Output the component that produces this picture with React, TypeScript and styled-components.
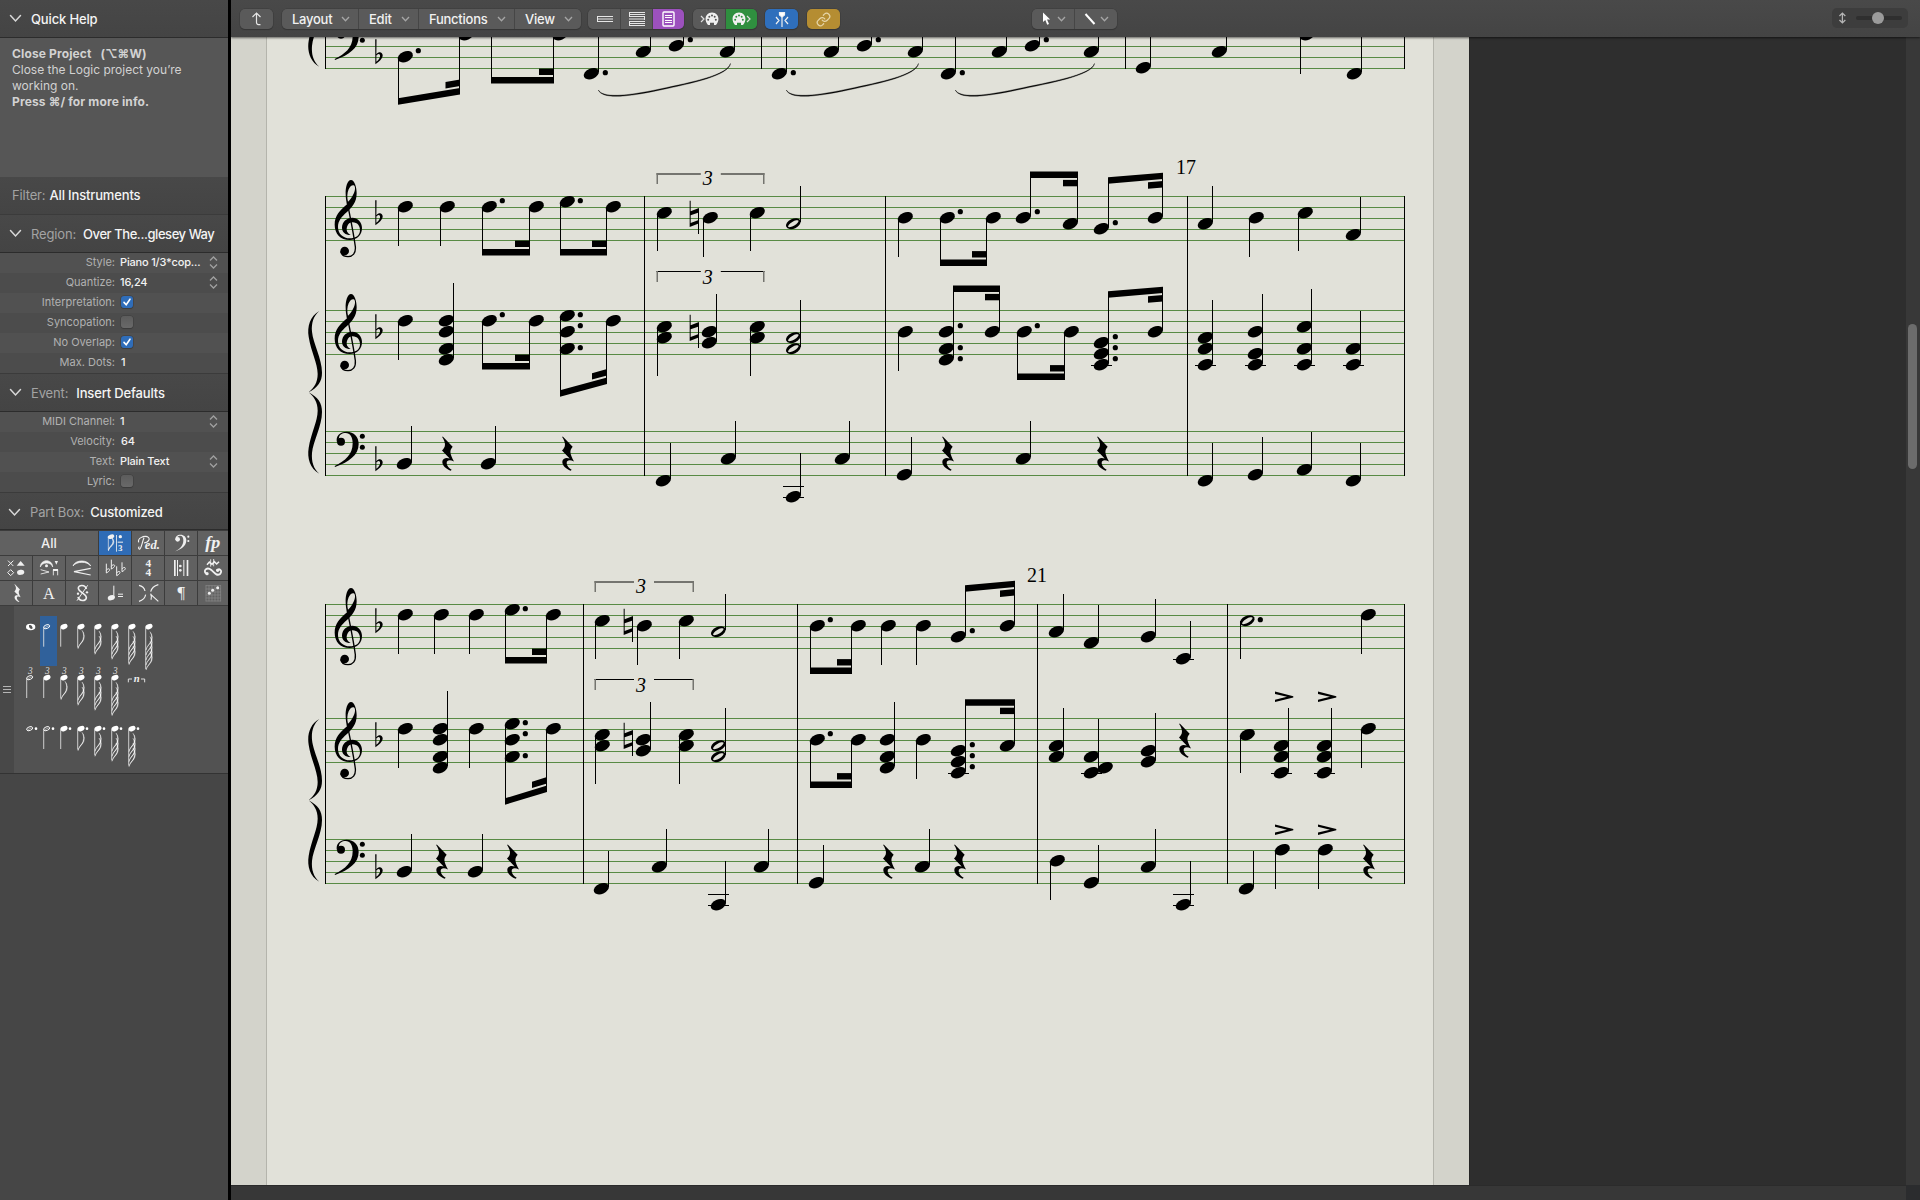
import React from "react";
import styled, { createGlobalStyle, css } from "styled-components";
import { Link } from "lucide-react";

const Global = createGlobalStyle`
  * { box-sizing: border-box; }
  html, body { margin: 0; padding: 0; background: #2e2e2e; }
  body { font-family: Inter, "Liberation Sans", sans-serif; overflow: hidden; }
`;

const SERIF = '"Liberation Serif", serif';
const PAPER = "#e1e1d9";

/* ---------- window frame ---------- */

const Window = styled.div`
  width: 1920px;
  height: 1200px;
  display: flex;
  overflow: hidden;
  background: #2e2e2e;
`;

const Sidebar = styled.aside`
  width: 231px;
  flex: none;
  display: flex;
  flex-direction: column;
  background: #464646;
  border-right: 3px solid #000;
`;

const Main = styled.main`
  flex: 1;
  min-width: 0;
  display: flex;
  flex-direction: column;
`;

/* ---------- sidebar ---------- */

const Header = styled.div<{ $h: number; $line?: string; $pad?: number; $up?: number; $down?: number }>`
  flex: none;
  height: ${(p) => p.$h}px;
  display: flex;
  align-items: center;
  padding: ${(p) => p.$down ?? 0}px 0 ${(p) => p.$up ?? 0}px ${(p) => p.$pad ?? 9}px;
  font-size: 13px;
  letter-spacing: -0.15px;
  white-space: pre;
  color: #f4f4f4;
  font-weight: 500;
  background: linear-gradient(#484848, #444);
  border-bottom: 1px solid ${(p) => p.$line ?? "#2c2c2c"};
`;

const Dim = styled.span<{ $gap?: number }>`
  color: #a3a3a3;
  font-weight: 400;
  margin-right: ${(p) => p.$gap ?? 7}px;
`;

const Tight = styled.span`
  letter-spacing: -0.43px;
`;

const Disclosure = styled.svg`
  width: 13px;
  height: 9px;
  margin-right: 9px;
  flex: none;
`;

const Help = styled.div`
  flex: none;
  height: 139px;
  padding: 8px 0 0 12px;
  background: #565656;
  color: #d2d2d2;
  font-size: 12px;
  line-height: 16px;
  white-space: pre;
  p { margin: 0; letter-spacing: 0; }
  b { font-weight: 700; letter-spacing: 0.14px; }
`;

const Param = styled.div<{ $alt?: boolean }>`
  flex: none;
  height: 20px;
  display: flex;
  align-items: center;
  padding: 0 10px 2px 0;
  background: ${(p) => (p.$alt ? "#4c4c4c" : "#515151")};
  font-size: 11px;
`;

const ParamLabel = styled.span`
  width: 115px;
  text-align: right;
  color: #b1b1b1;
  flex: none;
`;

const ParamValue = styled.span<{ $in?: number }>`
  margin-left: ${(p) => p.$in ?? 5}px;
  flex: 1;
  color: #f2f2f2;
  font-weight: 500;
  letter-spacing: -0.18px;
  white-space: nowrap;
`;

const Check = styled.span<{ $on?: boolean }>`
  margin-left: 6px;
  width: 12px;
  height: 12px;
  border-radius: 3px;
  display: flex;
  background: ${(p) => (p.$on ? "#2f6db9" : "linear-gradient(#5c5c5c, #696969)")};
  box-shadow: 0 0 0 0.5px #3c3c3c, 0 1px 1px rgba(0, 0, 0, 0.25);
`;

const Divider = styled.div`
  flex: none;
  height: 1px;
  background: #3b3b3b;
`;

const Palette = styled.div`
  flex: none;
  display: grid;
  grid-template-columns: repeat(6, 32px) 30px;
  grid-auto-rows: 24px;
  gap: 1px;
  padding: 1px 0;
  background: #3c3c3c;
`;

const Cell = styled.div<{ $on?: boolean; $wide?: boolean }>`
  display: flex;
  align-items: center;
  justify-content: flex-start;
  color: #f0f0f0;
  font-size: 13px;
  font-weight: 500;
  overflow: hidden;
  background: ${(p) => (p.$on ? "#2f6cb6" : "#616161")};
  ${(p) => p.$wide && css`grid-column: span 3; justify-content: center;`}
  svg { width: 32px; height: 24px; flex: none; }
`;

const Parts = styled.div`
  flex: none;
  height: 168px;
  display: flex;
  background: #525252;
  border-bottom: 1px solid #333;
`;

const Grip = styled.div`
  width: 14px;
  flex: none;
  display: flex;
  flex-direction: column;
  align-items: center;
  justify-content: center;
  gap: 2px;
  background: #484848;
  i { width: 8px; height: 1px; background: #b5b5b5; }
`;

const PartRows = styled.div`
  padding: 10px 0 0 9px;
`;

const PartRow = styled.div`
  height: 51px;
  display: flex;
`;

const PartCell = styled.div<{ $on?: boolean }>`
  width: 17px;
  height: 50px;
  background: ${(p) => (p.$on ? "#30619b" : "transparent")};
  svg { display: block; width: 17px; height: 50px; overflow: visible; }
`;

/* ---------- toolbar ---------- */

const Toolbar = styled.div`
  position: relative;
  z-index: 1;
  flex: none;
  height: 37px;
  display: flex;
  align-items: flex-start;
  padding: 9px 12px 0 9px;
  background: linear-gradient(#494949, #444);
  box-shadow: 0 1px 2px rgba(0, 0, 0, 0.55);
`;

const Group = styled.div<{ $ml?: number }>`
  display: flex;
  height: 20px;
  margin-left: ${(p) => p.$ml ?? 0}px;
  border-radius: 5px;
  overflow: hidden;
  box-shadow: 0 0 0 0.5px #3a3a3a, 0 1px 1px rgba(0, 0, 0, 0.3);
`;

const Btn = styled.div<{ $w: number; $bg?: string; $pl?: number }>`
  width: ${(p) => p.$w}px;
  display: flex;
  align-items: center;
  ${(p) => (p.$pl === undefined ? "justify-content: center;" : `justify-content: space-between; padding: 0 8px 1px ${p.$pl}px;`)}
  background: ${(p) => p.$bg ?? "#5a5a5a"};
  color: #f1f1f1;
  font-size: 13px;
  font-weight: 500;
  letter-spacing: -0.25px;
  & + & { border-left: 1px solid #464646; }
`;

const Spacer = styled.div`
  flex: 1;
`;

const ZoomBox = styled.div`
  width: 76px;
  height: 20px;
  margin: -1px 0 0 0;
  display: flex;
  align-items: center;
  gap: 9px;
  padding: 0 6px;
  border-radius: 5px;
  background: #3d3d3d;
`;

const Track = styled.div`
  width: 47px;
  height: 4px;
  border-radius: 2px;
  background: #2f2f2f;
  display: flex;
  align-items: center;
  padding-left: 16px;
`;

const Knob = styled.div`
  width: 12px;
  height: 12px;
  border-radius: 50%;
  background: #9b9b9b;
`;

/* ---------- score area ---------- */

const Work = styled.div`
  flex: 1;
  min-height: 0;
  display: grid;
  grid-template-columns: 1238px 1fr 14px;
  grid-template-rows: 1fr 15px;
`;

const Sheet = styled.div`
  display: flex;
  background: #d3d3cb;
  padding: 0 35px;
  svg { display: block; flex: none; }
`;

const Page = styled.div`
  width: 1168px;
  background: ${PAPER};
  border: solid #b4b4ac;
  border-width: 0 1px;
`;

const Empty = styled.div`
  background: #2e2e2e;
  border-left: 1px solid #262626;
`;

const VScroll = styled.div`
  background: #383838;
  padding: 287px 0 0 2px;
`;

const Thumb = styled.div`
  width: 9px;
  height: 145px;
  border-radius: 5px;
  background: #6c6c6c;
`;

const HScroll = styled.div`
  grid-column: span 2;
  background: #373737;
  border-top: 1px solid #2b2b2b;
`;

const Corner = styled.div`
  background: #2b2c2e;
`;

/* ---------- music glyphs, drawn in thirds of a pixel ---------- */

const G_BODY =
  "M153,90 C142,90 136,112 137,132 C137,145 139,155 141,163 C120,181 104,197 104,224 C104,252 122,270 149,270 C172,270 186,254 186,234 C186,216 173,203 157,203 C140,203 126,216 126,233 C126,246 136,255 152,255 C142,250 138,241 141,231 C144,221 150,217 158,217 C172,217 180,228 180,240 C180,256 168,265 149,265 C130,265 114,252 114,231 C114,212 126,200 140,187 C156,172 170,158 170,130 C170,112 164,90 153,90 Z M144,155 C141,142 141,130 146,118 C150,108 158,103 163,107 C167,112 165,124 160,133 C156,142 150,150 144,155 Z";
const F_BODY =
  "M111,877 C106,858 120,845 140,845 C162,845 176,860 176,882 C176,916 146,936 105,951 L104,948 C136,932 158,914 158,880 C158,860 150,849 137,849 C126,849 117,855 117,864 Z";
const REST =
  "M-15,-50 L-12,-50 L17,-20 C7,-8 8,0 21,24 C8,18 -1,20 -1,29 C0,38 6,44 14,49 L11,52 C-3,46 -15,36 -14,24 C-13,14 -2,11 8,15 L-15,-9 C-4,-19 -2,-30 -15,-50 Z";
const BRACE =
  "M58,483 C30,498 21,530 26,560 C33,605 53,640 53,672 C53,698 42,713 26,727 C54,712 66,695 66,668 C66,625 39,580 36,545 C34,520 40,498 58,483 Z";

const Flat = ({ x, y }: { x: number; y: number }) => (
  <g transform={`translate(${x} ${y}) scale(0.33333)`}>
    <path d="M-1.5,-55 L2.5,-55 L2,-10 C10,-20 21,-17 21,-5 C20,4 10,13 -1,20 Z M2,-6 L2,13 C10,6 14,0 13,-6 C12,-12 6,-12 2,-6 Z" fillRule="evenodd" />
  </g>
);

const Natural = ({ x, y }: { x: number; y: number }) => (
  <g transform={`translate(${x} ${y}) scale(0.33333)`}>
    <path d="M-13,-52 h3 v32 l25,-10 v78 h-3 v-31 l-25,10 Z M-10,-8 v23 l22,-8 v-23 Z" fillRule="evenodd" />
  </g>
);

const Rest = ({ x, y }: { x: number; y: number }) => (
  <path d={REST} transform={`translate(${x} ${y}) scale(0.33333)`} />
);

const Treble = ({ y }: { y: number }) => (
  <g transform={`translate(300 ${y - 46.5}) scale(0.33333)`}>
    <path d={G_BODY} fillRule="evenodd" />
    <path d="M142,158 C150,200 160,245 166,290 C168,310 158,320 144,320 C132,320 124,314 122,304" fill="none" stroke="#000" strokeWidth="4" />
    <circle cx="134" cy="303" r="13" />
  </g>
);

const Bass = ({ y }: { y: number }) => (
  <g transform={`translate(300 ${y - 281.5}) scale(0.33333)`}>
    <path d={F_BODY} />
    <circle cx="123" cy="875" r="12" />
    <circle cx="187" cy="859" r="7.5" />
    <circle cx="187" cy="892" r="7.5" />
  </g>
);

/* ---------- score model ---------- */

// x: pixel column of the stem; s: staff steps down from the top line
interface Note {
  x: number;
  up?: boolean;
  s: number[];
  dot?: boolean;
  half?: boolean;
  side?: number;
}
// y1/y2: upper edge of the primary beam relative to the top line; sx: start of the short beam
interface Beam {
  a: Note;
  b: Note;
  y1: number;
  y2: number;
  sx: number;
}
interface StaffData {
  notes: Note[];
  beams?: Beam[];
  rests?: number[];
  naturals?: number[];
  accents?: number[][];
  triplet?: number[];
}

const d = (x: number, ...s: number[]): Note => ({ x, s });
const u = (x: number, ...s: number[]): Note => ({ x, s, up: true });
const dot = (n: Note): Note => ({ ...n, dot: true });
const half = (n: Note): Note => ({ ...n, half: true });
const beam = (a: Note, b: Note, sx: number, y1: number, y2 = y1): Beam => ({ a, b, sx, y1, y2 });

const stepY = (top: number, s: number) => top + s * 5.5;

const Head = ({ cx, y, hollow }: { cx: number; y: number; hollow?: boolean }) => {
  const cy = Math.floor(y) - 0.33;
  return (
    <g transform={`translate(${cx} ${cy})`}>
      <ellipse rx={hollow ? 7.7 : 7.9} ry={hollow ? 4.9 : 5.2} transform="rotate(-24)" />
      {hollow && <ellipse rx="6" ry="2" fill={PAPER} transform="rotate(-31)" />}
    </g>
  );
};

const NoteView = ({ n, top, end }: { n: Note; top: number; end?: number }) => {
  const ys = n.s.map((s) => stepY(top, s));
  const hi = Math.min(...ys);
  const lo = Math.max(...ys);
  const cx = n.up ? n.x - 6.7 : n.x + 7.3;
  const tip = end ?? (n.up ? Math.floor(Math.min(hi - 38, top + 22)) : Math.round(lo + 38));
  const y1 = n.up ? tip : hi;
  const y2 = n.up ? lo - 2 : tip;
  const max = Math.max(...n.s);
  const ledgers = [10, 12].filter((l) => l <= max);
  return (
    <g>
      {n.s.map((s, i) => (
        <Head key={i} cx={cx} y={ys[i]} hollow={n.half} />
      ))}
      {n.side !== undefined && <Head cx={n.x + 7.3} y={stepY(top, n.side)} />}
      <rect x={n.x} y={y1} width="1" height={y2 - y1} />
      {ledgers.map((l) => (
        <rect key={l} x={n.x - 17} y={top + l * 5.5 - 0.5} width="21" height="1" />
      ))}
      {n.dot &&
        n.s.map((s) => (
          <circle key={s} cx={n.up ? n.x + 7.3 : n.x + 20.3} cy={stepY(top, s % 2 ? s : s - 1) - 1.3} r="2.6" />
        ))}
    </g>
  );
};

const BeamView = ({ b, top }: { b: Beam; top: number }) => {
  const x1 = b.a.x;
  const x2 = b.b.x + 1;
  const y1 = top + b.y1;
  const y2 = top + b.y2;
  const at = (x: number) => y1 + ((y2 - y1) * (x - x1)) / (x2 - x1);
  const off = b.a.up ? 8.4 : -8.4;
  const bar = (xa: number, o: number) =>
    `${xa},${at(xa) + o} ${x2},${y2 + o} ${x2},${y2 + o + 6.4} ${xa},${at(xa) + o + 6.4}`;
  return (
    <g>
      <NoteView n={b.a} top={top} end={y1 + 3} />
      <NoteView n={b.b} top={top} end={y2 + 3} />
      <polygon points={bar(x1, 0)} />
      <polygon points={bar(b.sx, off)} />
    </g>
  );
};

const Triplet = ({ t, top, soft }: { t: number[]; top: number; soft: boolean }) => {
  const [l, r, mid] = t;
  const y = soft ? top - 23.5 : top - 39.5;
  const h = soft ? 2 : 1;
  const tone = soft ? "#74746f" : "#000";
  return (
    <g>
      <rect x={l} y={y} width={mid - 6.5 - l} height={h} fill={tone} />
      <rect x={mid + 13.5} y={y} width={r - mid - 13.5} height={h} fill={tone} />
      <rect x={l} y={y} width="1.5" height="11" fill="#74746f" />
      <rect x={r - 1.5} y={y} width="1.5" height="11" fill="#74746f" />
      <text x={mid + 0.5} y={y + (soft ? 12.3 : 12.9)} fontFamily={SERIF} fontStyle="italic" fontSize="20" textAnchor="middle">3</text>
    </g>
  );
};

const Staff = ({ top, data, bass }: { top: number; data: StaffData; bass?: boolean }) => (
  <g>
    {[0, 1, 2, 3, 4].map((i) => (
      <rect key={i} x="325" y={top + i * 11 - 0.5} width="1080" height="1" fill="#588a44" />
    ))}
    {bass ? <Bass y={top} /> : <Treble y={top} />}
    <Flat x={375.7} y={top + (bass ? 33 : 22)} />
    {data.notes.map((n, i) => (
      <NoteView key={i} n={n} top={top} />
    ))}
    {data.beams?.map((b, i) => (
      <BeamView key={i} b={b} top={top} />
    ))}
    {data.rests?.map((x) => (
      <Rest key={x} x={x} y={top + 22} />
    ))}
    {data.naturals?.map((x) => (
      <Natural key={x} x={x} y={top + 21.5} />
    ))}
    {data.accents?.map(([x, y]) => (
      <path
        key={x}
        d={`M${x},${top + y - 5.2} L${x + 18.3},${top + y - 0.6} V${top + y + 0.6} L${x},${top + y + 5.2} V${top + y + 2.9} L${x + 12},${top + y} L${x},${top + y - 2.9} Z`}
      />
    ))}
  </g>
);

const TREBLE_A: StaffData = {
  notes: [
    d(398, 2), d(440, 2), d(657, 3), d(703, 4), d(750, 3), half(u(800, 5)), d(898, 4),
    u(1212, 5), d(1249, 4), d(1298, 3), u(1360, 7),
  ],
  beams: [
    beam(dot(d(482, 2)), d(529, 2), 515, 52.5),
    beam(dot(d(560, 1)), d(606, 2), 592, 52.5),
    beam(dot(d(940, 4)), d(986, 4), 972, 63),
    beam(dot(u(1030, 4)), u(1077, 5), 1063, -25),
    beam(dot(u(1108, 6)), u(1162, 4), 1148, -19.2, -23.8),
  ],
  naturals: [694],
  triplet: [656.5, 764.5, 707.3],
};

const PIANO_A: StaffData = {
  notes: [
    d(398, 2), u(453, 2, 4, 7, 9), d(657, 3, 5), u(716, 4, 6), d(750, 3, 5), half(u(800, 5, 7)), d(898, 4),
    u(1212, 5, 7, 10), u(1262, 4, 8, 10), u(1311, 3, 7, 10), u(1360, 7, 10),
  ],
  beams: [
    beam(dot(d(482, 2)), d(529, 2), 515, 52.5),
    beam(dot(d(560, 1, 4, 7)), d(606, 2), 592, 79.8, 67),
    beam(dot(u(953, 4, 7, 9)), u(999, 4), 985, -25),
    beam(dot(d(1017, 4)), d(1064, 4), 1050, 63),
    beam(dot(u(1108, 6, 8, 10)), u(1162, 4), 1148, -19.2, -23.8),
  ],
  naturals: [694],
  triplet: [656.5, 764.5, 707.3],
};

const BASS_A: StaffData = {
  notes: [
    u(411, 6), u(495, 6), u(670, 9), u(735, 5), u(800, 12), u(849, 5), u(911, 8), u(1030, 5),
    u(1212, 9), u(1262, 8), u(1311, 7), u(1360, 9),
  ],
  rests: [447, 567, 947, 1102],
};

const TREBLE_B: StaffData = {
  notes: [
    d(398, 2), d(434, 2), d(469, 2), d(595, 3), d(637, 4), d(679, 3), half(u(725, 5)), d(881, 4), d(916, 4),
    u(1063, 5), u(1098, 7), u(1155, 6), u(1190, 10), dot(half(d(1240, 3))), d(1361, 2),
  ],
  beams: [
    beam(dot(d(505, 1)), d(546, 2), 532, 52.5),
    beam(dot(d(810, 4)), d(851, 4), 837, 63),
    beam(dot(u(965, 6)), u(1014, 4), 1000, -19.2, -23.8),
  ],
  naturals: [628],
  triplet: [594.5, 694, 640.5],
};

const PIANO_B: StaffData = {
  notes: [
    d(398, 2), u(447, 2, 4, 7, 9), d(469, 2), d(595, 3, 5), u(650, 4, 6), d(679, 3, 5), half(u(725, 5, 7)),
    u(894, 4, 7, 9), d(916, 4), u(1063, 5, 7), { ...u(1098, 7, 10), side: 9 }, u(1155, 6, 8),
    d(1240, 3), u(1288, 5, 7, 10), u(1331, 5, 7, 10), d(1361, 2),
  ],
  beams: [
    beam(dot(d(505, 1, 4, 7)), d(546, 2), 532, 79.8, 67),
    beam(dot(d(810, 4)), d(851, 4), 837, 63),
    beam(dot(u(965, 6, 8, 10)), u(1014, 5), 1000, -19.2),
  ],
  rests: [1184],
  naturals: [628],
  accents: [[1275, -21.7], [1318, -21.7]],
  triplet: [594.5, 694, 640.5],
};

const BASS_B: StaffData = {
  notes: [
    u(411, 6), u(482, 6), u(608, 9), u(666, 5), u(725, 12), u(768, 5), u(823, 8), u(929, 5),
    d(1050, 4), u(1098, 8), u(1155, 5), u(1190, 12), u(1253, 9), d(1275, 2), d(1318, 2),
  ],
  rests: [441, 512, 888, 959, 1368],
  accents: [[1275, -9.8], [1318, -9.8]],
};

const BASS_TOP: StaffData = {
  notes: [
    dot(u(598, 9)), u(650, 5), dot(u(683, 4)), u(734, 5),
    dot(u(786, 9)), u(838, 5), dot(u(871, 4)), u(922, 5),
    dot(u(955, 9)), u(1006, 5), dot(u(1039, 4)), u(1098, 5),
    u(1150, 8), u(1226, 5), d(1300, 2), u(1361, 9),
  ],
  beams: [
    beam(dot(d(398, 6)), d(459, 2), 445.5, 73.8, 63.5),
    beam(d(491, 1), d(553, 2), 539, 52.5),
  ],
};

const Brace = ({ y }: { y: number }) => (
  <g transform={`translate(300 ${y - 46.5}) scale(0.33333)`}>
    <path d={BRACE} />
    <path d={BRACE} transform="translate(0 1454) scale(1 -1)" />
  </g>
);

const System = ({ y, bars, staves }: { y: number; bars: number[]; staves: StaffData[] }) => (
  <g>
    <Staff top={y} data={staves[0]} />
    <Staff top={y + 114} data={staves[1]} />
    <Staff top={y + 235} data={staves[2]} bass />
    {bars.map((x) => (
      <rect key={x} x={x} y={y - 0.5} width="1" height="280" />
    ))}
    {staves[0].triplet && <Triplet t={staves[0].triplet} top={y} soft />}
    {staves[1].triplet && <Triplet t={staves[1].triplet} top={y + 114} soft={false} />}
    <Brace y={y} />
  </g>
);

const slur = (x: number, x2: number) =>
  `M${x + 0.3},90 C${x + 5},98 ${x + 27},96.5 ${x + 62},89 C${x + 95},82 ${x2 - 3},75 ${x2},63.5 C${x2 - 2},75.6 ${x + 95},83 ${x + 62},90 C${x + 27},97.6 ${x + 4},99 ${x + 0.3},90 Z`;

const Score = () => (
  <svg width="1166" height="1148" viewBox="267 37 1166 1148">
    <Staff top={24.5} data={BASS_TOP} bass />
    {[325, 761, 1125, 1404].map((x) => (
      <rect key={x} x={x} y="30" width="1" height="39" />
    ))}
    <Brace y={-210.5} />
    <path d={slur(598, 730.5)} stroke="#000" strokeWidth="0.4" />
    <path d={slur(786, 918.5)} stroke="#000" strokeWidth="0.4" />
    <path d={slur(955, 1094.5)} stroke="#000" strokeWidth="0.4" />
    <System y={196.5} bars={[325, 644, 885, 1187, 1404]} staves={[TREBLE_A, PIANO_A, BASS_A]} />
    <System y={604.5} bars={[325, 583, 797, 1037, 1227, 1404]} staves={[TREBLE_B, PIANO_B, BASS_B]} />
    <g fontFamily={SERIF} fontSize="20" textAnchor="middle">
      <text x="1186" y="174">17</text>
      <text x="1037" y="582">21</text>
    </g>
  </svg>
);

/* ---------- sidebar pieces ---------- */

const Down = () => (
  <Disclosure viewBox="0 0 13 9">
    <path d="M1.5 1.5 L6.5 7 L11.5 1.5" fill="none" stroke="#d8d8d8" strokeWidth="1.5" strokeLinecap="round" />
  </Disclosure>
);

const Stepper = () => (
  <svg width="9" height="13" viewBox="0 0 9 13" fill="none" stroke="#a0a0a0" strokeWidth="1.3">
    <path d="M1 4.5 L4.5 1 L8 4.5 M1 8.5 L4.5 12 L8 8.5" />
  </svg>
);

const Tick = () => (
  <svg width="12" height="12" viewBox="0 0 12 12" fill="none" stroke="#fff" strokeWidth="1.6" strokeLinecap="round">
    <path d="M3 6.4 L5.2 8.8 L9 3.2" />
  </svg>
);

interface ParamProps {
  label: string;
  value?: string;
  step?: boolean;
  check?: boolean;
  alt?: boolean;
  indent?: number;
}

const ParamRow = ({ label, value, step, check, alt, indent }: ParamProps) => (
  <Param $alt={alt}>
    <ParamLabel>{label}:</ParamLabel>
    {value !== undefined && <ParamValue $in={indent}>{value}</ParamValue>}
    {check !== undefined && <Check $on={check}>{check && <Tick />}</Check>}
    {step && <Stepper />}
  </Param>
);

const Icon = ({ children }: { children: React.ReactNode }) => (
  <svg viewBox="0 0 96 72" fill="#f0f0f0">{children}</svg>
);

const MiniFlat = ({ x, y }: { x: number; y: number }) => (
  <path transform={`translate(${x} ${y})`} fill="none" stroke="#f0f0f0" strokeWidth="3" d="M-4,-20 V8 C4,4 8,-1 5,-4 C2,-6 -2,-3 -4,0" />
);

const rowOne: React.ReactNode[] = [
  <Icon key="notes">
    <ellipse cx="36" cy="17" rx="10" ry="6.5" transform="rotate(-20 36 17)" />
    <path d="M28,17 V57 C30,46 42,42 42,32 C42,27 40,22 38,19 C46,28 46,36 40,43 C34,49 30,52 28,60" stroke="#f0f0f0" strokeWidth="2" />
    <rect x="51" y="12" width="2.5" height="50" />
    <circle cx="64" cy="17" r="5" />
    <rect x="56" y="32" width="16" height="3" />
    <text x="64" y="59" fontSize="27" fontWeight="700" textAnchor="middle" fontFamily={SERIF}>3</text>
  </Icon>,
  <Icon key="ped">
    <path d="M36,20 C30,34 30,46 24,54 M24,54 C20,56 18,50 22,47 M20,34 C16,22 34,14 46,17 C56,21 52,34 36,36" fill="none" stroke="#f0f0f0" strokeWidth="3.4" />
    <text x="61" y="54" fontSize="38" fontStyle="italic" fontWeight="700" textAnchor="middle" fontFamily={SERIF} textLength="46">ed.</text>
  </Icon>,
  <Icon key="bass">
    <path d="M32,26 C30,16 38,11 46,11 C57,11 64,18 64,28 C64,46 48,55 31,61 C46,53 55,44 55,28 C55,19 52,14 45,14 C40,14 36,17 36,21 Z" />
    <circle cx="38" cy="25" r="7" />
    <circle cx="70" cy="17" r="3.2" />
    <circle cx="70" cy="30" r="3.2" />
  </Icon>,
  <Icon key="fp">
    <text x="44" y="50" fontSize="50" fontStyle="italic" fontWeight="700" textAnchor="middle" fontFamily={SERIF} textLength="45" lengthAdjust="spacingAndGlyphs">fp</text>
  </Icon>,
];

const otherRows: React.ReactNode[] = [
  <Icon key="heads">
    <path d="M24,14 L40,30 M40,14 L24,30" stroke="#f0f0f0" strokeWidth="3" />
    <path d="M50,29 L62,15 L74,29 Z" />
    <path d="M32,41 L41,50 L32,59 L23,50 Z" fill="none" stroke="#f0f0f0" strokeWidth="3" />
    <ellipse cx="62" cy="49" rx="11" ry="7.5" transform="rotate(-10 62 49)" />
  </Icon>,
  <Icon key="artic">
    <path d="M22,33 C22,8 59,8 59,33 C55,17 27,17 22,33 Z" stroke="#f0f0f0" strokeWidth="2" />
    <circle cx="40.5" cy="29" r="4.5" />
    <path d="M65,15 H75 L70,26 Z" />
    <path d="M23,41 L48,48 L23,54" fill="none" stroke="#f0f0f0" strokeWidth="2.6" />
    <path d="M61,58 V41 H74 V58" fill="none" stroke="#f0f0f0" strokeWidth="2.6" />
    <rect x="60" y="39" width="15" height="6" />
  </Icon>,
  <Icon key="slurs">
    <path d="M21,30 C28,10 66,10 74,30 C64,15 32,15 21,30 Z" stroke="#f0f0f0" strokeWidth="2.4" />
    <path d="M74,37 L24,47 L74,57" fill="none" stroke="#f0f0f0" strokeWidth="3.4" />
  </Icon>,
  <Icon key="keys">
    <MiniFlat x={26} y={43} />
    <MiniFlat x={41} y={31} />
    <MiniFlat x={57} y={51} />
    <MiniFlat x={73} y={39} />
  </Icon>,
  <Icon key="time">
    <text x="49" y="34" fontSize="34" fontWeight="700" textAnchor="middle" fontFamily={SERIF}>4</text>
    <text x="49" y="60" fontSize="34" fontWeight="700" textAnchor="middle" fontFamily={SERIF}>4</text>
  </Icon>,
  <Icon key="repeat">
    <rect x="27" y="12" width="5" height="48" />
    <rect x="36" y="12" width="3" height="48" />
    <circle cx="46" cy="30" r="4" />
    <circle cx="46" cy="43" r="4" />
    <rect x="55" y="12" width="3" height="48" />
    <rect x="65" y="12" width="5" height="48" />
  </Icon>,
  <Icon key="orn">
    <path d="M24,53 C14,42 28,32 40,42 C50,50 56,62 66,54 C76,44 62,34 56,44" fill="none" stroke="#f0f0f0" strokeWidth="5.5" />
    <circle cx="27" cy="53" r="5" />
    <circle cx="59" cy="43" r="5" />
    <path d="M27,26 L34,18 L42,25 L49,17 L56,24 L63,17" fill="none" stroke="#f0f0f0" strokeWidth="4.5" />
    <path d="M38,10 V32 M47,9 V31" fill="none" stroke="#f0f0f0" strokeWidth="2.6" />
  </Icon>,
  <Icon key="rest">
    <path d={REST} transform="translate(51 36) scale(0.52)" />
  </Icon>,
  <Icon key="text">
    <text x="48" y="53" fontSize="49" textAnchor="middle" fontFamily={SERIF}>A</text>
  </Icon>,
  <Icon key="segno">
    <path d="M61,24 C58,10 37,11 37,21 C37,34 61,37 61,50 C61,61 40,62 36,48" fill="none" stroke="#f0f0f0" strokeWidth="5" />
    <path d="M33,59 L65,13" stroke="#f0f0f0" strokeWidth="3" />
    <circle cx="36" cy="38" r="3.500" />
    <circle cx="63" cy="34" r="3.500" />
  </Icon>,
  <Icon key="tempo">
    <ellipse cx="37" cy="50" rx="11" ry="7.5" transform="rotate(-20 37 50)" />
    <rect x="43" y="14" width="3" height="36" />
    <rect x="57" y="38" width="15" height="3" />
    <rect x="57" y="45" width="15" height="3" />
  </Icon>,
  <Icon key="bend">
    <path d="M21,13 C31,15 37,21 39,30 M79,11 C69,14 59,20 56,32 M21,61 C32,58 39,52 41,41 M79,61 L57,41 M57,56 C60,50 58,44 56,38" fill="none" stroke="#f0f0f0" strokeWidth="3.4" />
  </Icon>,
  <Icon key="para">
    <text x="49" y="51" fontSize="50" textAnchor="middle" fontFamily={SERIF}>¶</text>
  </Icon>,
  <Icon key="chord">
    <path d="M24,13 V61 M33,13 V61 M42,13 V61 M51,13 V61 M60,13 V61 M68,13 V61 M23,14 H69 M23,24 H69 M23,33 H69 M23,42 H69 M23,51 H69 M23,60 H69" stroke="#8c8c8c" strokeWidth="2" />
    <circle cx="34" cy="37" r="4.5" />
    <circle cx="44" cy="28" r="4.5" />
    <circle cx="59" cy="20" r="4.5" />
  </Icon>,
];

interface PartSpec {
  kind: "whole" | "half" | "full";
  stem?: number;
  flags?: number;
  dotted?: boolean;
  three?: boolean;
  on?: boolean;
}

const Part = ({ p }: { p: PartSpec }) => {
  const stem = p.stem ?? 0;
  return (
    <PartCell $on={p.on}>
      <svg viewBox="0 0 51 150" fill="#fff">
        {p.three && (
          <text x="22" y="22" fontSize="28" fontStyle="italic" textAnchor="middle" fontFamily={SERIF} fill="#ddd">3</text>
        )}
        {p.kind === "whole" && (
          <path fillRule="evenodd" d="M9,33 a14,9.5 0 1 0 28,0 a14,9.5 0 1 0 -28,0 Z M18,28 C23,24 29,31 29,37 C24,42 17,36 18,28 Z" />
        )}
        {p.kind === "half" && <ellipse cx="20" cy="32" rx="9.5" ry="5.5" fill="none" stroke="#fff" strokeWidth="2.6" transform="rotate(-22 20 32)" />}
        {p.kind === "half" && <path d="M14,35 L27,29" stroke="#fff" strokeWidth="1.5" />}
        {p.kind === "full" && <ellipse cx="21" cy="32" rx="11" ry="7.5" transform="rotate(-22 21 32)" />}
        {stem > 0 && <rect x="10" y="34" width="2.5" height={stem - 34} fill="#e6e6e6" />}
        {Array.from({ length: p.flags ?? 0 }, (_, i) => {
          const y = stem - i * 15;
          return (
            <path key={i} d={`M12,${y + 3} C14,${y - 12} 28,${y - 16} 29,${y - 34} C29,${y - 42} 26,${y - 48} 24,${y - 52} C32,${y - 42} 33,${y - 30} 27,${y - 20} C22,${y - 12} 15,${y - 8} 12,${y + 3} Z`} stroke="#fff" strokeWidth="1" />
          );
        })}
        {p.dotted && <circle cx="39" cy="32" r="4" />}
      </svg>
    </PartCell>
  );
};

const plain: PartSpec[] = [
  { kind: "whole" },
  { kind: "half", stem: 92, on: true },
  { kind: "full", stem: 92 },
  { kind: "full", stem: 95, flags: 1 },
  { kind: "full", stem: 112, flags: 2 },
  { kind: "full", stem: 127, flags: 3 },
  { kind: "full", stem: 143, flags: 4 },
  { kind: "full", stem: 159, flags: 5 },
];
const threes: PartSpec[] = [
  { kind: "half", stem: 93, three: true },
  { kind: "full", stem: 93, three: true },
  { kind: "full", stem: 95, flags: 1, three: true },
  { kind: "full", stem: 112, flags: 2, three: true },
  { kind: "full", stem: 127, flags: 3, three: true },
  { kind: "full", stem: 143, flags: 4, three: true },
];
const dotted: PartSpec[] = [
  { kind: "half", dotted: true },
  { kind: "half", stem: 93, dotted: true },
  { kind: "full", stem: 93, dotted: true },
  { kind: "full", stem: 95, flags: 1, dotted: true },
  { kind: "full", stem: 112, flags: 2, dotted: true },
  { kind: "full", stem: 127, flags: 3, dotted: true },
  { kind: "full", stem: 143, flags: 4, dotted: true },
];

const Caret = () => (
  <svg width="9" height="6" viewBox="0 0 9 6" fill="none" stroke="#a5a5a5" strokeWidth="1.3">
    <path d="M1 1 L4.5 4.8 L8 1" />
  </svg>
);

const Plug = ({ pins }: { pins: string }) => (
  <svg width="14" height="14" viewBox="0 0 14 14">
    <path d="M3 13 C-1.5 8 0.5 0.5 7 0.5 C13.5 0.5 15.5 8 11 13 H9 V10.8 H5 V13 Z" fill="#f0f0f0" />
    <g fill={pins}>
      <circle cx="3.2" cy="7.8" r="1" />
      <circle cx="4.3" cy="4.8" r="1" />
      <circle cx="7" cy="3.5" r="1" />
      <circle cx="9.7" cy="4.8" r="1" />
      <circle cx="10.8" cy="7.8" r="1" />
    </g>
  </svg>
);

const Angle = () => (
  <svg width="5" height="8" viewBox="0 0 5 8" fill="none" stroke="#ddd" strokeWidth="1.2">
    <path d="M1 1 L4 4 L1 7" />
  </svg>
);

export default function App() {
  return (
    <Window>
      <Global />
      <Sidebar>
        <Header $h={38}><Down />Quick Help</Header>
        <Help>
          <p><b>Close Project   (⌥⌘W)</b></p>
          <p>Close the Logic project you’re</p>
          <p>working on.</p>
          <p><b>Press ⌘/ for more info.</b></p>
        </Help>
        <Header $h={38} $line="#3b3b3b" $pad={12} $up={2}>
          <Dim $gap={4}>Filter:</Dim>All Instruments
        </Header>
        <Header $h={38}><Down /><Dim>Region:</Dim><Tight>Over The...glesey Way</Tight></Header>
        <ParamRow label="Style" value="Piano 1/3*cop..." step />
        <ParamRow label="Quantize" value="16,24" step alt />
        <ParamRow label="Interpretation" check />
        <ParamRow label="Syncopation" check={false} alt />
        <ParamRow label="No Overlap" check />
        <ParamRow label="Max. Dots" value="1" alt indent={6} />
        <Divider />
        <Header $h={38}><Down /><Dim $gap={8}>Event:</Dim>Insert Defaults</Header>
        <ParamRow label="MIDI Channel" value="1" step />
        <ParamRow label="Velocity" value="64" alt indent={6} />
        <ParamRow label="Text" value="Plain Text" step />
        <ParamRow label="Lyric" check={false} alt />
        <Divider />
        <Header $h={37} $pad={8} $down={2}><Down /><Dim $gap={6}>Part Box:</Dim>Customized</Header>
        <Palette>
          <Cell $wide>All</Cell>
          {rowOne.map((icon, i) => (
            <Cell key={i} $on={i === 0}>{icon}</Cell>
          ))}
          {otherRows.map((icon, i) => (
            <Cell key={i}>{icon}</Cell>
          ))}
        </Palette>
        <Parts>
          <Grip><i /><i /><i /></Grip>
          <PartRows>
            <PartRow>{plain.map((p, i) => <Part key={i} p={p} />)}</PartRow>
            <PartRow>
              {threes.map((p, i) => <Part key={i} p={p} />)}
              <PartCell>
                <svg viewBox="0 0 51 150" fill="none" stroke="#ddd" strokeWidth="3">
                  <path d="M10,46 V36 H21 M48,36 H59 V46" />
                  <text x="35" y="44" fontSize="32" fontStyle="italic" fontWeight="700" textAnchor="middle" fontFamily={SERIF} fill="#eee" stroke="none">n</text>
                </svg>
              </PartCell>
            </PartRow>
            <PartRow>{dotted.map((p, i) => <Part key={i} p={p} />)}</PartRow>
          </PartRows>
        </Parts>
      </Sidebar>
      <Main>
        <Toolbar>
          <Group>
            <Btn $w={33}>
              <svg width="12" height="14" viewBox="0 0 12 14" fill="none" stroke="#e6e6e6" strokeWidth="1.2">
                <path d="M1.5 5 L5.5 1 L9.5 5 M5.5 1 V10.5 C5.5 12.3 7 12.9 9.5 12.6" />
              </svg>
            </Btn>
          </Group>
          <Group $ml={9}>
            <Btn $w={76} $pl={10}>Layout<Caret /></Btn>
            <Btn $w={60} $pl={10}>Edit<Caret /></Btn>
            <Btn $w={96} $pl={10}>Functions<Caret /></Btn>
            <Btn $w={67} $pl={10}>View<Caret /></Btn>
          </Group>
          <Group $ml={7}>
            <Btn $w={32}>
              <svg width="17" height="8" viewBox="0 0 17 8" fill="none" stroke="#e6e6e6" strokeWidth="1">
                <path d="M1.5 1 V7 M1 1.5 H17 M1 4 H17 M1 6.500 H17" />
              </svg>
            </Btn>
            <Btn $w={32}>
              <svg width="16" height="16" viewBox="0 0 16 16" fill="none" stroke="#e6e6e6" strokeWidth="1">
                <path d="M0.5 1 V5 M15.5 5 V9 M0.5 10 V15 M0 1.5 H16 M0 3.5 H16 M0 5.5 H16 M0 8 H16 M0 10.5 H16 M0 12.5 H16 M0 14.5 H16" />
              </svg>
            </Btn>
            <Btn $w={32} $bg="#9c51bd">
              <svg width="13" height="16" viewBox="0 0 13 16" fill="none" stroke="#fff" strokeWidth="1.4">
                <rect x="1" y="1" width="11" height="14" rx="1" />
                <path d="M3 4.500 H10 M3 6.500 H10 M3 9.500 H10 M3 11.500 H10" strokeWidth="1" />
              </svg>
            </Btn>
          </Group>
          <Group $ml={9}>
            <Btn $w={32}><Angle /><Plug pins="#555" /></Btn>
            <Btn $w={32} $bg="#2f8f3f"><Plug pins="#2f8f3f" /><Angle /></Btn>
          </Group>
          <Group $ml={8}>
            <Btn $w={33} $bg="#2f6fbc">
              <svg width="16" height="15" viewBox="0 0 16 15" fill="none" stroke="#f0f0f0" strokeWidth="1.2">
                <path d="M5.5 0.5 H10.5 V3 L8 5 L5.5 3 Z" fill="#fff" />
                <path d="M8 4 V15 M2 5 L5 8.5 L2 12 M14 5 L11 8.5 L14 12" />
              </svg>
            </Btn>
          </Group>
          <Group $ml={9}>
            <Btn $w={33} $bg="#b58d32"><Link size={15} color="#e6d5a8" strokeWidth={2} /></Btn>
          </Group>
          <Group $ml={192}>
            <Btn $w={42} $pl={9}>
              <svg width="11" height="14" viewBox="0 0 11 14">
                <path d="M2 0.5 V10 L4.3 8 L6.2 12.7 L8 12 L6 7.5 H9.2 Z" fill="#fff" />
              </svg>
              <Caret />
            </Btn>
            <Btn $w={43} $pl={9}>
              <svg width="12" height="14" viewBox="0 0 12 14">
                <path d="M1.5 2 L10.5 12" stroke="#fff" strokeWidth="2" />
              </svg>
              <Caret />
            </Btn>
          </Group>
          <Spacer />
          <ZoomBox>
            <svg width="9" height="12" viewBox="0 0 9 12" fill="none" stroke="#b5b5b5" strokeWidth="1.3">
              <path d="M4.5 1 V11 M1.5 4 L4.5 1 L7.5 4 M1.5 8 L4.5 11 L7.5 8" />
            </svg>
            <Track><Knob /></Track>
          </ZoomBox>
        </Toolbar>
        <Work>
          <Sheet>
            <Page><Score /></Page>
          </Sheet>
          <Empty />
          <VScroll><Thumb /></VScroll>
          <HScroll />
          <Corner />
        </Work>
      </Main>
    </Window>
  );
}
